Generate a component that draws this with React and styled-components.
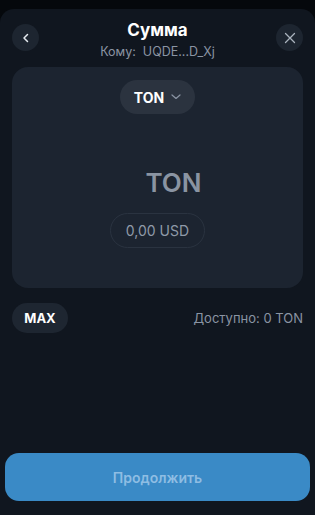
import React, { useState } from 'react';
import styled, { createGlobalStyle } from 'styled-components';

const Global = createGlobalStyle`
  html, body {
    margin: 0;
    padding: 0;
    background: #05080c;
    font-family: Inter, "Noto Sans", sans-serif;
  }
  * { box-sizing: border-box; }
`;

const Sheet = styled.div`
  margin-top: 9px;
  height: 506px;
  background: #10161f;
  border-radius: 14px 14px 0 0;
  display: flex;
  flex-direction: column;
  padding: 0 12px 14px;
`;

const Header = styled.div`
  display: grid;
  grid-template-columns: 27px 1fr 27px;
  align-items: start;
  padding-top: 11px;
  height: 58px;
`;

const RoundBtn = styled.button`
  width: 27px;
  height: 27px;
  margin-top: 4px;
  border-radius: 50%;
  border: none;
  background: #1d2530;
  color: #c9d0d9;
  display: flex;
  align-items: center;
  justify-content: center;
  padding: 0;
`;

const Titles = styled.div`
  display: flex;
  flex-direction: column;
  align-items: center;
`;

const Title = styled.div`
  color: #ffffff;
  font-size: 17px;
  font-weight: 700;
  line-height: 20px;
`;

const Sub = styled.div`
  color: #8a94a3;
  font-size: 12.5px;
  line-height: 16px;
  margin-top: 4px;
  white-space: pre;
`;

const Card = styled.div`
  height: 221px;
  border-radius: 16px;
  background: #1c2430;
  display: flex;
  flex-direction: column;
  align-items: center;
  padding-top: 13px;
`;

const TokenPill = styled.button`
  height: 34px;
  padding: 0 14px 0 14px;
  border-radius: 17px;
  border: none;
  background: #2b333f;
  color: #ffffff;
  font-family: inherit;
  font-size: 14px;
  font-weight: 700;
  display: flex;
  align-items: center;
  gap: 7px;
`;

const AmountRow = styled.div`
  margin-top: 52px;
  display: flex;
  align-items: center;
  gap: 8px;
  height: 32px;
`;

const AmountInput = styled.input`
  width: 24px;
  border: none;
  background: transparent;
  outline: none;
  color: #ffffff;
  font-family: inherit;
  font-size: 26px;
  font-weight: 600;
  padding: 0;
`;

const Ticker = styled.span`
  color: #8a94a2;
  font-size: 26px;
  font-weight: 600;
`;

const FiatPill = styled.div`
  margin-top: 15px;
  height: 35px;
  padding: 0 15px;
  border-radius: 18px;
  border: 1px solid #2a3340;
  color: #8f9aa8;
  font-size: 14px;
  display: flex;
  align-items: center;
`;

const BalanceRow = styled.div`
  margin-top: 15px;
  display: flex;
  align-items: center;
  justify-content: space-between;
`;

const MaxBtn = styled.button`
  width: 56px;
  height: 30px;
  border-radius: 15px;
  border: none;
  background: #1e2631;
  color: #ffffff;
  font-family: inherit;
  font-size: 13px;
  font-weight: 700;
`;

const Available = styled.span`
  color: #8a94a3;
  font-size: 13px;
`;

const Spacer = styled.div`
  flex: 1;
`;

const Continue = styled.button`
  margin: 0 -7px;
  height: 48px;
  border-radius: 14px;
  border: none;
  background: #3a8ac6;
  color: #8ebde3;
  font-family: inherit;
  font-size: 14px;
  font-weight: 600;
`;

export default function App() {
  const [amount, setAmount] = useState('');
  return (
    <>
      <Global />
      <Sheet>
        <Header>
          <RoundBtn aria-label="back">
            <svg width="12" height="12" viewBox="0 0 12 12" fill="none">
              <path d="M7.5 2.5 L4 6 L7.5 9.5" stroke="#e6ebf0" strokeWidth="1.5" strokeLinecap="round" strokeLinejoin="round" />
            </svg>
          </RoundBtn>
          <Titles>
            <Title>Сумма</Title>
            <Sub>{'Кому:  UQDE...D_Xj'}</Sub>
          </Titles>
          <RoundBtn aria-label="close">
            <svg width="12" height="12" viewBox="0 0 12 12" fill="none">
              <path d="M1.5 1.5 L10.5 10.5 M10.5 1.5 L1.5 10.5" stroke="#aab3be" strokeWidth="1.3" strokeLinecap="round" />
            </svg>
          </RoundBtn>
        </Header>
        <Card>
          <TokenPill>
            TON
            <svg width="10" height="6" viewBox="0 0 10 6" fill="none">
              <path d="M1 1 L5 4.5 L9 1" stroke="#8a94a3" strokeWidth="1.2" strokeLinecap="round" strokeLinejoin="round" />
            </svg>
          </TokenPill>
          <AmountRow>
            <AmountInput value={amount} onChange={(e) => setAmount(e.target.value)} />
            <Ticker>TON</Ticker>
          </AmountRow>
          <FiatPill>0,00 USD</FiatPill>
        </Card>
        <BalanceRow>
          <MaxBtn>MAX</MaxBtn>
          <Available>Доступно: 0 TON</Available>
        </BalanceRow>
        <Spacer />
        <Continue>Продолжить</Continue>
      </Sheet>
    </>
  );
}
